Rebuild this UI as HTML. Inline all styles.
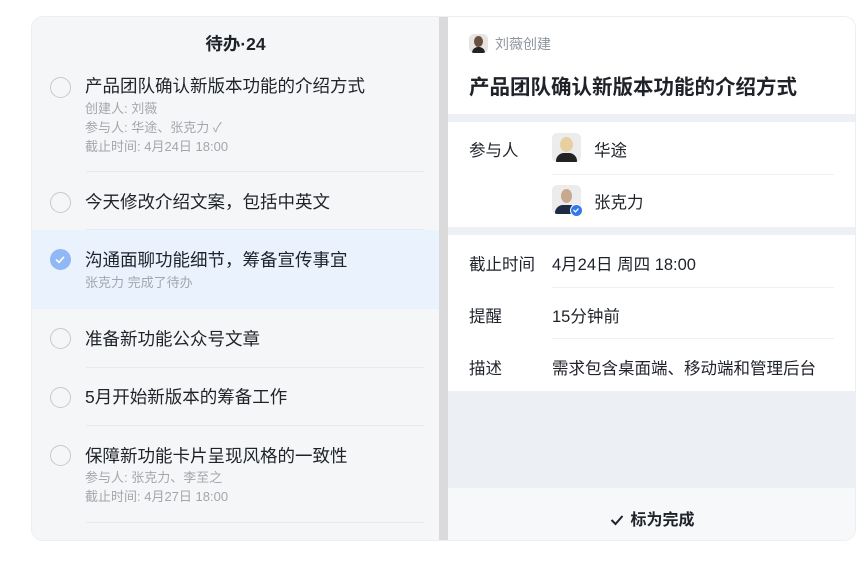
<!DOCTYPE html>
<html><head><meta charset="utf-8"><style>
*{margin:0;padding:0;box-sizing:border-box}
body{width:865px;height:580px;background:#fff;font-family:"Liberation Sans","Noto Sans CJK SC",sans-serif;position:relative;overflow:hidden}
.a{position:absolute;white-space:nowrap}
.card{position:absolute;left:31px;top:16px;width:825px;height:525px;border:1px solid #eceef1;border-radius:12px;overflow:hidden}
.left{position:absolute;left:0;top:0;width:407px;height:525px;background:#f5f6f8}
.div{position:absolute;left:407px;top:0;width:9px;height:525px;background:#dadada}
.right{position:absolute;left:416px;top:0;width:409px;height:525px;background:#fff}
.t{font-size:17.5px;color:#1f2329}
.s{font-size:13px;color:#a3a7ad;line-height:19px}
.c{position:absolute;left:18px;width:21px;height:21px;border:1.5px solid #c6c9ce;border-radius:50%}
.sep{position:absolute;height:1px;background:#e8eaed}
.band{position:absolute;left:0;width:409px;height:8px;background:#edf0f4}
.lab{font-size:16.5px;color:#1f2329}
.av{position:absolute;border-radius:5px;background:#eee;overflow:hidden}
</style></head><body>
<div class="card">
<div class="left">
 <div class="a" style="left:0;width:407px;text-align:center;top:14px;font-size:17.5px;font-weight:bold;color:#1f2329">待办·24</div>
 <div class="c" style="top:60px"></div>
 <div class="a t" style="left:53px;top:56px">产品团队确认新版本功能的介绍方式</div>
 <div class="a s" style="left:53px;top:82px">创建人: 刘薇<br>参与人: 华途、张克力 ✓<br>截止时间: 4月24日 18:00</div>
 <div class="sep" style="left:54px;top:154px;width:338px"></div>
 <div class="c" style="top:175px"></div>
 <div class="a t" style="left:53px;top:172px">今天修改介绍文案，包括中英文</div>
 <div class="sep" style="left:54px;top:212px;width:338px"></div>
 <div style="position:absolute;left:0;top:213px;width:407px;height:79px;background:#eaf2fd"></div>
 <div class="c" style="top:232px;background:#8fb8f4;border-color:#8fb8f4"><svg width="18" height="18" viewBox="0 0 18 18" style="position:absolute;left:0;top:0"><path d="M5 9.5l3 2.8 5-5.5" stroke="#fff" stroke-width="1.6" fill="none"/></svg></div>
 <div class="a t" style="left:53px;top:230px">沟通面聊功能细节，筹备宣传事宜</div>
 <div class="a s" style="left:53px;top:256px">张克力 完成了待办</div>
 <div class="c" style="top:311px"></div>
 <div class="a t" style="left:53px;top:309px">准备新功能公众号文章</div>
 <div class="sep" style="left:54px;top:350px;width:338px"></div>
 <div class="c" style="top:370px"></div>
 <div class="a t" style="left:53px;top:367px">5月开始新版本的筹备工作</div>
 <div class="sep" style="left:54px;top:408px;width:338px"></div>
 <div class="c" style="top:428px"></div>
 <div class="a t" style="left:53px;top:426px">保障新功能卡片呈现风格的一致性</div>
 <div class="a s" style="left:53px;top:451px">参与人: 张克力、李至之<br>截止时间: 4月27日 18:00</div>
 <div class="sep" style="left:54px;top:505px;width:338px"></div>
</div>
<div class="div"></div>
<div class="right">
 <div class="av" style="left:21px;top:17px;width:19px;height:19px;background:#e8e4e0"><div style="position:absolute;left:5px;top:2px;width:9px;height:11px;border-radius:50%;background:#6b5040"></div><div style="position:absolute;left:3px;top:13px;width:13px;height:8px;border-radius:6px 6px 0 0;background:#222"></div></div>
 <div class="a" style="left:47px;top:17px;font-size:14px;color:#8f959e">刘薇创建</div>
 <div class="a" style="left:21px;top:53px;font-size:20.5px;font-weight:bold;color:#1f2329">产品团队确认新版本功能的介绍方式</div>
 <div class="band" style="top:97px"></div>
 <div class="a lab" style="left:21px;top:120px">参与人</div>
 <div class="av" style="left:104px;top:116px;width:29px;height:29px;background:#ececec"><div style="position:absolute;left:8px;top:4px;width:13px;height:15px;border-radius:50%;background:#e8cfa0"></div><div style="position:absolute;left:4px;top:20px;width:21px;height:10px;border-radius:8px 8px 0 0;background:#222"></div></div>
 <div class="a lab" style="left:146px;top:120px">华途</div>
 <div class="sep" style="left:104px;top:157px;width:282px;background:#eef0f2"></div>
 <div class="av" style="left:104px;top:168px;width:29px;height:29px;background:#ececec"><div style="position:absolute;left:9px;top:4px;width:11px;height:14px;border-radius:50%;background:#c9a890"></div><div style="position:absolute;left:3px;top:20px;width:23px;height:10px;border-radius:8px 8px 0 0;background:#1c2a44"></div></div>
 <div style="position:absolute;left:122px;top:187px;width:13px;height:13px;border-radius:50%;background:#3377ee;border:1.5px solid #fff"><svg width="10" height="10" viewBox="0 0 10 10" style="position:absolute;left:0;top:0"><path d="M2.5 5l2 1.8 3-3.3" stroke="#fff" stroke-width="1.3" fill="none"/></svg></div>
 <div class="a lab" style="left:146px;top:172px">张克力</div>
 <div class="band" style="top:210px"></div>
 <div class="a lab" style="left:21px;top:234px">截止时间</div>
 <div class="a lab" style="left:104px;top:234px">4月24日 周四 18:00</div>
 <div class="sep" style="left:104px;top:270px;width:282px;background:#eef0f2"></div>
 <div class="a lab" style="left:21px;top:286px">提醒</div>
 <div class="a lab" style="left:104px;top:286px">15分钟前</div>
 <div class="sep" style="left:104px;top:321px;width:282px;background:#eef0f2"></div>
 <div class="a lab" style="left:21px;top:338px">描述</div>
 <div class="a lab" style="left:104px;top:338px">需求包含桌面端、移动端和管理后台</div>
 <div style="position:absolute;left:0;top:374px;width:409px;height:97px;background:#eceff3"></div>
 <div style="position:absolute;left:0;top:471px;width:409px;height:54px;background:#f7f8fa"></div>
 <div class="a" style="left:0;width:409px;text-align:center;top:489px;font-size:16px;font-weight:bold;color:#1f2329"><svg width="14" height="12" viewBox="0 0 14 12" style="vertical-align:-1px;margin-right:6px"><path d="M1.5 6l4 4 7-8" stroke="#1f2329" stroke-width="2" fill="none"/></svg>标为完成</div>
</div>
</div>
</body></html>
